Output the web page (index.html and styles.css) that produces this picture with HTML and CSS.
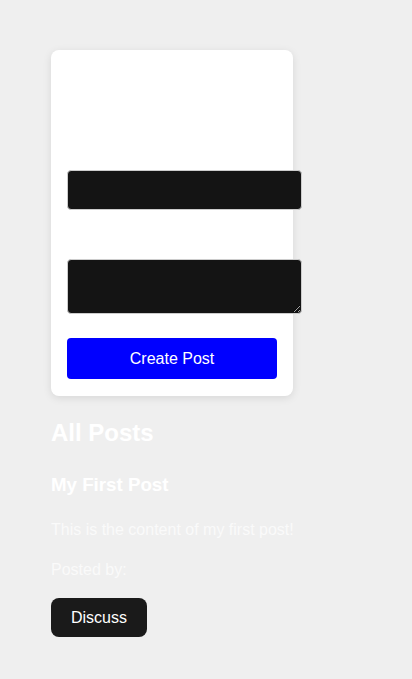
FILE: index.html
```html
<!DOCTYPE html>
<html>
<head>
<meta charset="utf-8">
<link rel="stylesheet" href="styles.css">
</head>
<body>
<div class="page">
  <form class="card">
    <h2 class="card-title">Create a Post</h2>
    <label class="label">Title</label>
    <input class="field" type="text">
    <label class="label label-content">Content</label>
    <textarea class="field area"></textarea>
    <button class="create" type="button">Create Post</button>
  </form>
  <section class="posts">
    <h2 class="posts-title">All Posts</h2>
    <article class="post">
      <h3 class="post-title">My First Post</h3>
      <p class="post-body">This is the content of my first post!</p>
      <p class="post-meta">Posted by:</p>
      <button class="discuss" type="button">Discuss</button>
    </article>
  </section>
</div>
</body>
</html>
```
FILE: styles.css
```css
html, body {
  margin: 0;
  padding: 0;
  background: #efefef;
  font-family: "Liberation Sans", Arial, sans-serif;
  color: #fff;
}
.page {
  padding: 50px 51px;
}
.card {
  width: 210px;
  padding: 16px 16px 17px;
  background: #fff;
  border-radius: 8px;
  box-shadow: 0 2px 8px rgba(0,0,0,0.1);
  display: flex;
  flex-direction: column;
}
.card-title {
  margin: 0 0 28px;
  font-size: 24px;
  line-height: 28px;
  color: #fff;
}
.label {
  display: block;
  font-size: 16px;
  line-height: 20px;
  margin: 20px 0 8px;
  color: #fff;
}
.label-content {
  margin-top: 21px;
}
.field {
  box-sizing: border-box;
  width: 235px;
  height: 40px;
  padding: 11px;
  border: 1px solid #ccc;
  border-radius: 4px;
  background: #141414;
  color: #fff;
  font-family: inherit;
  font-size: 16px;
  margin: 0;
}
.area {
  height: 55px;
  display: block;
}
.create {
  margin-top: 24px;
  width: 210px;
  height: 41px;
  border: none;
  border-radius: 4px;
  background: #0000ff;
  color: #fff;
  font-family: inherit;
  font-size: 16px;
}
.posts-title {
  margin: 23px 0 0;
  font-size: 24px;
  line-height: 28px;
}
.post-title {
  margin: 27px 0 0;
  font-size: 18.72px;
  line-height: 22px;
}
.post-body {
  margin: 24px 0 0;
  font-size: 16px;
  line-height: 20px;
  color: #fafafa;
}
.post-meta {
  margin: 20px 0 0;
  font-size: 16px;
  line-height: 20px;
  color: #fafafa;
}
.discuss {
  margin-top: 18px;
  width: 96px;
  height: 39px;
  border: none;
  border-radius: 8px;
  background: #1a1a1a;
  color: #fff;
  font-family: inherit;
  font-size: 16px;
}
```
